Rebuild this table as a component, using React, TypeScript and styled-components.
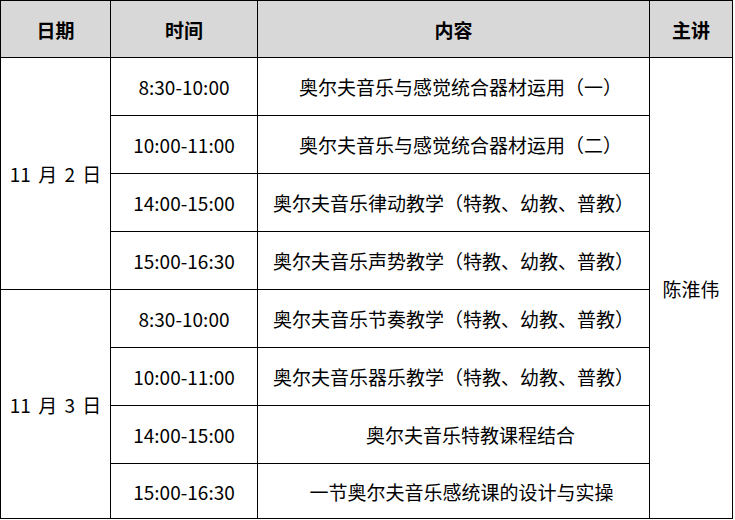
import React, { FC } from "react";
import styled, { createGlobalStyle } from "styled-components";

type Session = { time: string; content: string; indent?: number };

const days: { date: string; sessions: Session[] }[] = [
  {
    date: "11 月 2 日",
    sessions: [
      { time: "8:30-10:00", content: "奥尔夫音乐与感觉统合器材运用（一）", indent: 14 },
      { time: "10:00-11:00", content: "奥尔夫音乐与感觉统合器材运用（二）", indent: 14 },
      { time: "14:00-15:00", content: "奥尔夫音乐律动教学（特教、幼教、普教）" },
      { time: "15:00-16:30", content: "奥尔夫音乐声势教学（特教、幼教、普教）" },
    ],
  },
  {
    date: "11 月 3 日",
    sessions: [
      { time: "8:30-10:00", content: "奥尔夫音乐节奏教学（特教、幼教、普教）" },
      { time: "10:00-11:00", content: "奥尔夫音乐器乐教学（特教、幼教、普教）" },
      { time: "14:00-15:00", content: "奥尔夫音乐特教课程结合", indent: 34 },
      { time: "15:00-16:30", content: "一节奥尔夫音乐感统课的设计与实操", indent: 16 },
    ],
  },
];

const App: FC = () => {
  return (
    <>
      <GlobalStyle />
      <Table>
        <colgroup>
          <col style={{ width: 110 }} />
          <col style={{ width: 147 }} />
          <col style={{ width: 392 }} />
          <col style={{ width: 83 }} />
        </colgroup>
        <thead>
          <tr>
            <HeadCell>日期</HeadCell>
            <HeadCell>时间</HeadCell>
            <HeadCell>内容</HeadCell>
            <HeadCell>主讲</HeadCell>
          </tr>
        </thead>
        <tbody>
          {days.map((day, d) =>
            day.sessions.map((s, i) => (
              <Row key={`${d}-${i}`} $last={d === 1 && i === 3}>
                {i === 0 && <DateCell rowSpan={4}>{day.date}</DateCell>}
                <Cell>{s.time}</Cell>
                <Cell $indent={s.indent || 0}>{s.content}</Cell>
                {d === 0 && i === 0 && <Cell rowSpan={8}>陈淮伟</Cell>}
              </Row>
            ))
          )}
        </tbody>
      </Table>
    </>
  );
};

export default App;

const GlobalStyle = createGlobalStyle`
  body {
    margin: 0;
    background: #ffffff;
    font-family: "Noto Sans CJK SC", "Noto Sans", sans-serif;
    color: #000000;
  }
`;

const Table = styled.table`
  border-collapse: collapse;
  table-layout: fixed;
  width: 733px;
  font-size: 19px;
`;

const HeadCell = styled.th`
  height: 56px;
  padding: 0;
  border: 1px solid #000;
  background: #d8d8d8;
  font-weight: bold;
  text-align: center;
  vertical-align: middle;
`;

const Row = styled.tr<{ $last: boolean }>`
  height: ${(p) => (p.$last ? 55 : 58)}px;
`;

const Cell = styled.td<{ $indent?: number }>`
  padding: 0 0 0 ${(p) => p.$indent || 0}px;
  border: 1px solid #000;
  text-align: center;
  vertical-align: middle;
  white-space: nowrap;
`;

const DateCell = styled(Cell)`
  word-spacing: 3px;
`;
